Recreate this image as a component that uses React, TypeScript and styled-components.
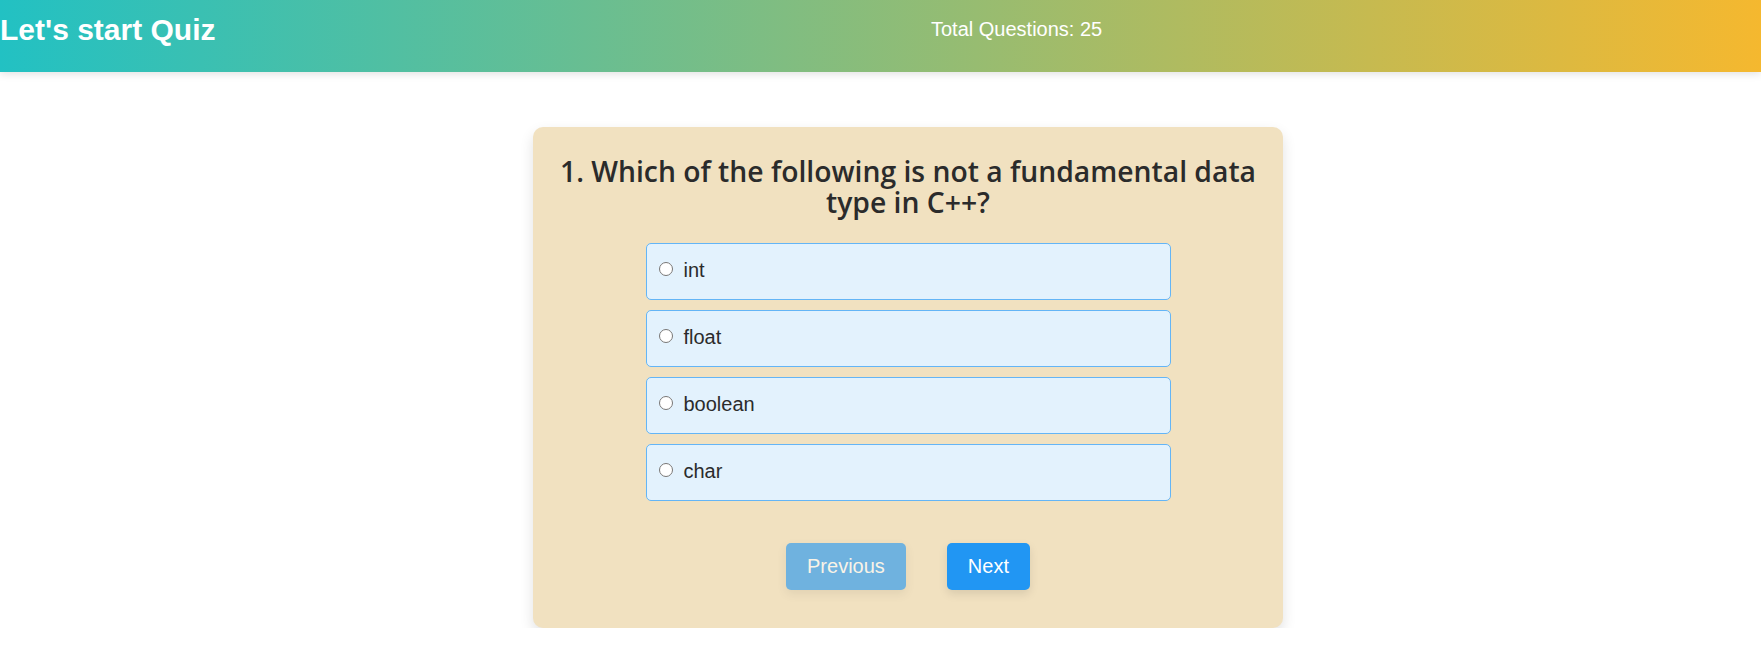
import React, { useState } from "react";
import styled, { createGlobalStyle } from "styled-components";

const GlobalStyle = createGlobalStyle`
  body {
    margin: 0;
    background: #ffffff;
    font-family: "Liberation Sans", Arial, sans-serif;
  }
`;

const Header = styled.header`
  display: grid;
  grid-template-columns: 931px auto;
  height: 72px;
  background: linear-gradient(90deg, #22c1c3, #f5b82f);
  box-shadow: 0 2px 8px rgba(0, 0, 0, 0.12);
  color: #ffffff;
`;

const Title = styled.h1`
  margin: 0;
  padding-top: 13px;
  font-size: 30px;
  font-weight: 700;
  line-height: normal;
`;

const Count = styled.p`
  margin: 0;
  padding-top: 18px;
  font-size: 20px;
`;

const Main = styled.main`
  display: flex;
  justify-content: center;
  padding: 55px 0 0 55px;
`;

const Card = styled.section`
  box-sizing: border-box;
  width: 750px;
  padding: 29px 20px 38px;
  background: #f1e1c0;
  border-radius: 10px;
  box-shadow: 0 6px 14px rgba(0, 0, 0, 0.12);
  display: flex;
  flex-direction: column;
  align-items: center;
`;

const Question = styled.h2`
  margin: 0 0 25px;
  font-family: "Open Sans", "Noto Sans", sans-serif;
  font-size: 28.3px;
  font-weight: 600;
  line-height: 31px;
  color: #2b2b2b;
  text-align: center;
`;

const Line = styled.span`
  display: block;
  white-space: nowrap;
`;

const Options = styled.div`
  display: flex;
  flex-direction: column;
  gap: 10px;
  width: 525px;
`;

const Option = styled.label<{ $selected: boolean }>`
  box-sizing: border-box;
  height: 57px;
  padding: 15px 10px;
  background: ${(p) => (p.$selected ? "#bbdefb" : "#e3f2fd")};
  border: 1px solid #64b5f6;
  border-radius: 5px;
  font-size: 20px;
  line-height: 23px;
  color: #2b2b2b;
  cursor: pointer;
`;

const Radio = styled.input`
  width: 14px;
  height: 14px;
  margin: 0 11px 0 2px;
  vertical-align: 1px;
`;

const Actions = styled.div`
  display: flex;
  gap: 41px;
  margin-top: 42px;
`;

const NavButton = styled.button<{ $muted?: boolean }>`
  padding: 12px 21px;
  border: none;
  border-radius: 5px;
  background: #2196f3;
  color: #ffffff;
  font-family: "Liberation Sans", Arial, sans-serif;
  font-size: 20px;
  line-height: 23px;
  box-shadow: 0 4px 10px rgba(0, 0, 0, 0.1);
  opacity: ${(p) => (p.$muted ? 0.62 : 1)};
  cursor: pointer;
`;

const choices = ["int", "float", "boolean", "char"];

export default function App(): React.ReactElement {
  const [picked, setPicked] = useState<string | null>(null);

  return (
    <>
      <GlobalStyle />
      <Header>
        <Title>Let's start Quiz</Title>
        <Count>Total Questions: 25</Count>
      </Header>
      <Main>
        <Card>
          <Question>
            <Line>1. Which of the following is not a fundamental data</Line>
            <Line>type in C++?</Line>
          </Question>
          <Options>
            {choices.map((c) => (
              <Option key={c} $selected={picked === c}>
                <Radio
                  type="radio"
                  name="answer"
                  checked={picked === c}
                  onChange={() => setPicked(c)}
                />
                {c}
              </Option>
            ))}
          </Options>
          <Actions>
            <NavButton $muted disabled>
              Previous
            </NavButton>
            <NavButton>Next</NavButton>
          </Actions>
        </Card>
      </Main>
    </>
  );
}
